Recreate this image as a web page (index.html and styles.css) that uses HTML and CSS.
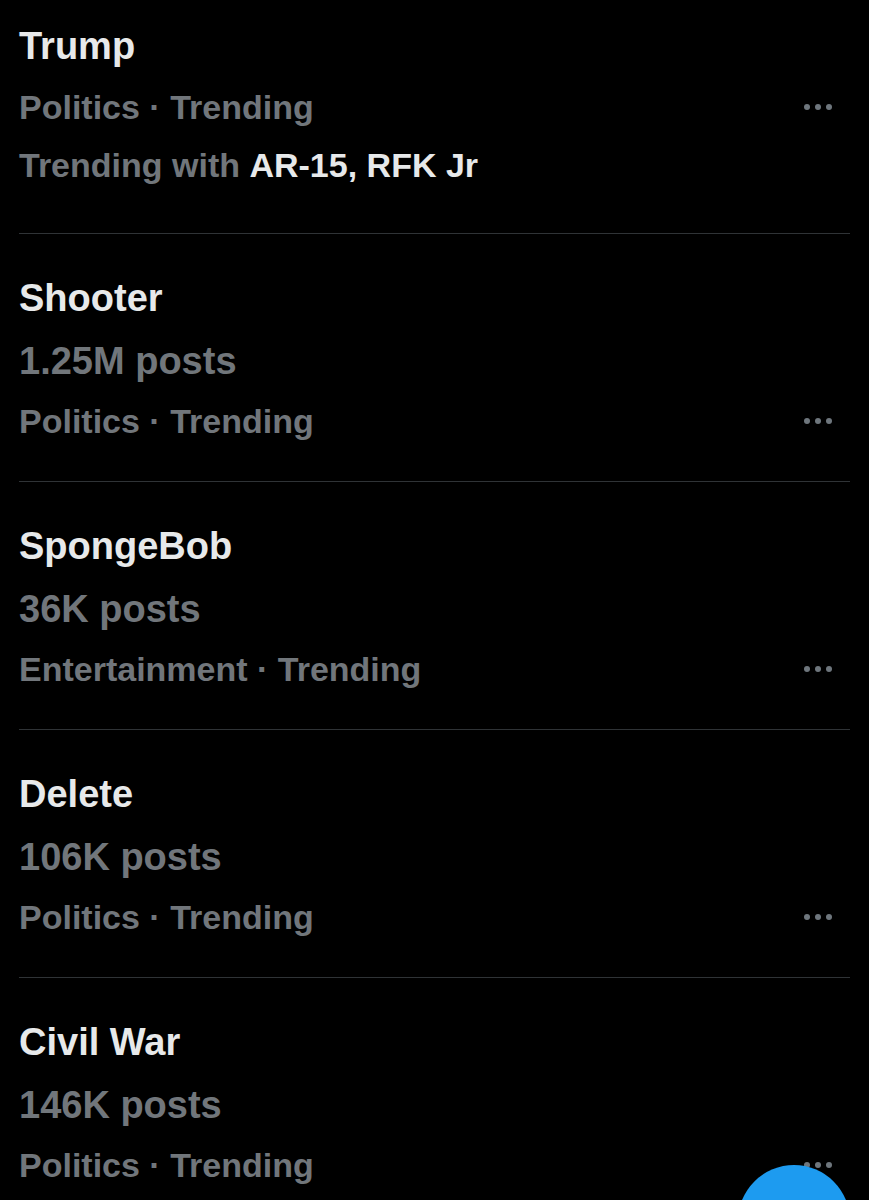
FILE: index.html
```html
<!DOCTYPE html>
<html lang="en">
<head>
  <meta charset="UTF-8" />
  <meta name="viewport" content="width=device-width, initial-scale=1.0" />
  <title>Trending</title>
  <link rel="stylesheet" href="styles.css">
</head>
<body>
  <div id="trends">
    <div class="trend trend-first">
      <div class="trend-title">Trump</div>
      <div class="trend-meta">
        <span>Politics · Trending</span>
        <svg class="more" width="28" height="8" viewBox="0 0 28 8"><circle cx="3" cy="4" r="3"/><circle cx="14" cy="4" r="3"/><circle cx="25" cy="4" r="3"/></svg>
      </div>
      <div class="trend-meta">
        <span>Trending with <strong>AR-15, RFK Jr</strong></span>
      </div>
    </div>

    <div class="trend">
      <div class="trend-title">Shooter</div>
      <div class="trend-posts">1.25M posts</div>
      <div class="trend-meta">
        <span>Politics · Trending</span>
        <svg class="more" width="28" height="8" viewBox="0 0 28 8"><circle cx="3" cy="4" r="3"/><circle cx="14" cy="4" r="3"/><circle cx="25" cy="4" r="3"/></svg>
      </div>
    </div>

    <div class="trend">
      <div class="trend-title">SpongeBob</div>
      <div class="trend-posts">36K posts</div>
      <div class="trend-meta">
        <span>Entertainment · Trending</span>
        <svg class="more" width="28" height="8" viewBox="0 0 28 8"><circle cx="3" cy="4" r="3"/><circle cx="14" cy="4" r="3"/><circle cx="25" cy="4" r="3"/></svg>
      </div>
    </div>

    <div class="trend">
      <div class="trend-title">Delete</div>
      <div class="trend-posts">106K posts</div>
      <div class="trend-meta">
        <span>Politics · Trending</span>
        <svg class="more" width="28" height="8" viewBox="0 0 28 8"><circle cx="3" cy="4" r="3"/><circle cx="14" cy="4" r="3"/><circle cx="25" cy="4" r="3"/></svg>
      </div>
    </div>

    <div class="trend trend-last">
      <div class="trend-title">Civil War</div>
      <div class="trend-posts">146K posts</div>
      <div class="trend-meta">
        <span>Politics · Trending</span>
        <svg class="more" width="28" height="8" viewBox="0 0 28 8"><circle cx="3" cy="4" r="3"/><circle cx="14" cy="4" r="3"/><circle cx="25" cy="4" r="3"/></svg>
      </div>
    </div>
  </div>

  <button class="fab" aria-label="Compose"></button>
</body>
</html>
```

FILE: styles.css
```css
html, body {
  background: #000;
  margin: 0;
  padding: 0;
  height: 1200px;
  overflow: hidden;
}
body {
  font-family: 'Liberation Sans', Arial, sans-serif;
  font-weight: bold;
  color: #71767b;
}
#trends {
  padding: 0 19px;
}
.trend {
  padding: 32px 0 31px 0;
  border-bottom: 1px solid #2f3336;
}
.trend-first {
  padding-top: 14px;
  padding-bottom: 39px;
}
.trend-last {
  border-bottom: none;
}
.trend-title {
  font-size: 38px;
  line-height: 64px;
  color: #e7e9ea;
}
.trend-posts {
  font-size: 38px;
  line-height: 62px;
  color: #71767b;
}
.trend-meta {
  display: flex;
  align-items: center;
  justify-content: space-between;
  font-size: 34px;
  line-height: 58px;
  color: #71767b;
}
.trend-meta strong {
  color: #e7e9ea;
}
.more {
  fill: #6e767d;
  margin-right: 18px;
}
.fab {
  position: fixed;
  right: 19px;
  bottom: -77px;
  width: 112px;
  height: 112px;
  border: none;
  border-radius: 50%;
  background: #1d9bf0;
  padding: 0;
}
```
